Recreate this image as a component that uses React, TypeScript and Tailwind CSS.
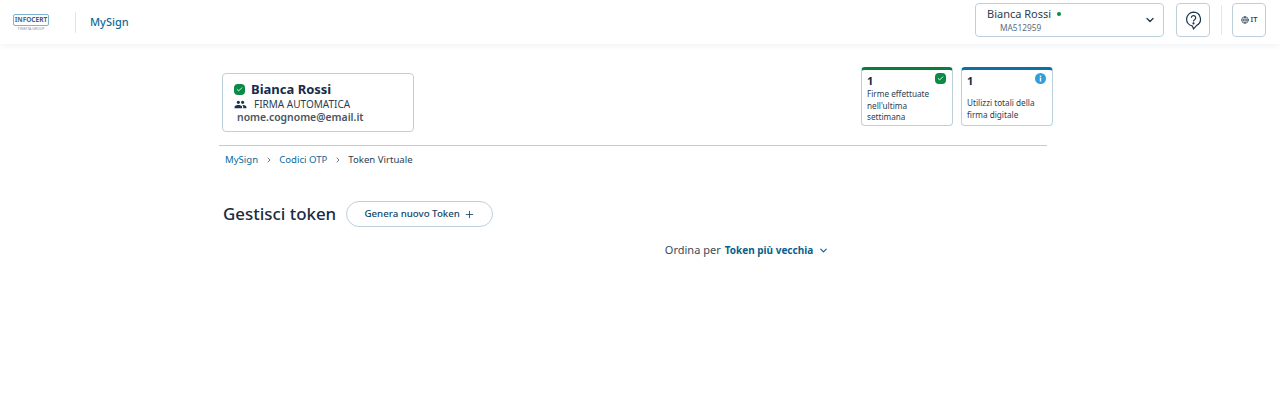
import React from "react";
import { ChevronDown, ChevronRight, Plus, Check, Globe } from "lucide-react";

const Logo = () => (
  <div className="flex flex-col items-center w-[36px]">
    <div className="flex h-[12px] w-[36px] items-center justify-center rounded-[2px] border border-[#7fb2d0] text-[6.5px] font-bold leading-none text-[#3d6f9a]">
      INFO<span className="text-[#4a5a78]">CERT</span>
    </div>
    <span className="mt-[1px] text-[3.5px] leading-none text-[#8a8f98]">TINEXTA GROUP</span>
  </div>
);

const HelpIcon = () => (
  <svg width="17" height="19" viewBox="0 0 17 19" fill="none" stroke="#1d3550" strokeWidth="1.2">
    <path d="M8.5 1.2a7 7 0 0 1 3.2 13.2L8.5 17.8 7.4 15.1A7 7 0 0 1 8.5 1.2z" />
    <path d="M6.3 6.8a2.2 2.2 0 1 1 3.3 1.9c-.7.4-1.1.9-1.1 1.8" />
    <circle cx="8.5" cy="12.4" r=".5" fill="#1d3550" />
  </svg>
);

const GroupIcon = () => (
  <svg width="13" height="13" viewBox="0 0 24 24" fill="#1d3550">
    <path d="M16 11c1.66 0 2.99-1.34 2.99-3S17.66 5 16 5s-3 1.34-3 3 1.34 3 3 3zm-8 0c1.66 0 2.99-1.34 2.99-3S9.66 5 8 5 5 6.34 5 8s1.34 3 3 3zm0 2c-2.33 0-7 1.17-7 3.5V19h14v-2.5C15 14.17 10.33 13 8 13zm8 0c-.29 0-.62.02-.97.05 1.16.84 1.97 1.97 1.97 3.45V19h6v-2.5c0-2.33-4.67-3.5-7-3.5z" />
  </svg>
);

const InfoDot = () => (
  <svg width="11" height="11" viewBox="0 0 11 11">
    <circle cx="5.5" cy="5.5" r="5.5" fill="#2f9fdc" />
    <rect x="4.8" y="4.6" width="1.4" height="3.9" fill="white" />
    <rect x="4.8" y="2.6" width="1.4" height="1.3" fill="white" />
  </svg>
);

const App = () => {
  return (
    <div className="min-h-[419px] bg-white font-['Noto_Sans','Open_Sans',sans-serif] text-[#1d3550]">
      {/* Top bar */}
      <header className="flex h-[44px] items-center justify-between shadow-[0_2px_6px_rgba(30,50,80,0.06)]">
        <div className="flex items-center pl-[13px]">
          <Logo />
          <div className="ml-[26px] h-[21px] w-px bg-[#dfe5ea]" />
          <span className="ml-[14px] text-[11px] font-medium text-[#0b6a9b]">MySign</span>
        </div>
        <div className="mb-[4px] flex items-center pr-[14px]">
          <div className="flex h-[34px] w-[189px] items-center justify-between rounded border border-[#bcd0dc] pl-[11px] pr-[7px]">
            <div className="flex flex-col">
              <div className="flex items-center text-[11px] leading-[14px] text-[#2c3e50]">
                Bianca Rossi
                <span className="ml-[6px] h-[4px] w-[4px] rounded-full bg-[#0a8a45]" />
              </div>
              <span className="ml-[13px] text-[8.3px] leading-[13px] text-[#5b6b7a]">MA512959</span>
            </div>
            <ChevronDown size={12} strokeWidth={2.5} />
          </div>
          <div className="ml-[12px] flex h-[34px] w-[34px] items-center justify-center rounded border border-[#bcd0dc]">
            <HelpIcon />
          </div>
          <div className="ml-[11px] h-[30px] w-px bg-[#e3e8ec]" />
          <div className="ml-[10px] flex h-[34px] w-[34px] items-center justify-center gap-[2px] rounded border border-[#bcd0dc] text-[7.5px] font-medium">
            <Globe size={8} strokeWidth={2} />
            IT
          </div>
        </div>
      </header>

      <main className="pl-[219px]">
        <div className="w-[828px]">
          <div className="flex items-start justify-between border-b border-[#c3ccd3] pb-[13px] pl-[3px] pr-0">
            <div className="mt-[29px] flex h-[59px] w-[192px] flex-col rounded border border-[#bcd0dc] pl-[11px] pt-[6px]">
              <div className="flex items-center">
                <span className="flex h-[11px] w-[11px] items-center justify-center rounded-[4px] bg-[#0a8a45]">
                  <Check size={7} strokeWidth={3} color="white" />
                </span>
                <span className="ml-[6px] text-[13px] font-bold leading-[18px] text-[#132c4a]">Bianca Rossi</span>
              </div>
              <div className="flex items-center text-[10px] leading-[13px] text-[#2c3e50]">
                <GroupIcon />
                <span className="ml-[7px]">FIRMA AUTOMATICA</span>
              </div>
              <span className="ml-[3px] text-[10.4px] font-semibold leading-[13px] text-[#4a5561]">nome.cognome@email.it</span>
            </div>

            <div className="mr-[-6px] mt-[23px] flex gap-[8px]">
              <div className="relative h-[59px] w-[92px] rounded border border-t-[3px] border-[#bcd0dc] border-t-[#0a7d3e] pl-[5px] pt-[4px]">
                <span className="absolute right-[6px] top-[3px] flex h-[11px] w-[11px] items-center justify-center rounded-[4px] bg-[#0a8a45]">
                  <Check size={7} strokeWidth={3} color="white" />
                </span>
                <div className="text-[11px] font-bold leading-[14px] text-[#132c4a]">1</div>
                <div className="text-[8.2px] leading-[11.5px] text-[#2c3e50]">
                  Firme effettuate
                  <br />
                  nell'ultima
                  <br />
                  settimana
                </div>
              </div>
              <div className="relative h-[59px] w-[92px] rounded border border-t-[3px] border-[#bcd0dc] border-t-[#0b6fa8] pl-[5px] pt-[4px]">
                <span className="absolute right-[6px] top-[3px]">
                  <InfoDot />
                </span>
                <div className="text-[11px] font-bold leading-[14px] text-[#132c4a]">1</div>
                <div className="mt-[9px] text-[8.2px] leading-[11.5px] text-[#2c3e50]">
                  Utilizzi totali della
                  <br />
                  firma digitale
                </div>
              </div>
            </div>
          </div>

          <nav className="mt-[7px] flex items-center pl-[6px] text-[9.6px] leading-[14px]">
            <span className="text-[#0b6a9b]">MySign</span>
            <ChevronRight size={8} className="mx-[6.5px]" />
            <span className="text-[#0b6a9b]">Codici OTP</span>
            <ChevronRight size={8} className="mx-[6.5px]" />
            <span className="text-[#2c3e50]">Token Virtuale</span>
          </nav>

          <div className="mt-[34px] flex items-center pl-[4px]">
            <h1 className="text-[16.9px] font-medium leading-[26px] text-[#1b2a41]">Gestisci token</h1>
            <button className="ml-[10px] flex h-[26px] w-[147px] items-center justify-center gap-[4px] rounded-full border border-[#bcd0dc] text-[9.7px] font-medium text-[#0f4468]">
              Genera nuovo Token
              <Plus size={11} strokeWidth={1.8} />
            </button>
          </div>

          <div className="mt-[14px] flex items-center justify-center pl-[228px] text-[11px] leading-[18px]">
            <span className="text-[#3c4a58]">Ordina per</span>
            <span className="ml-[4px] text-[10px] font-bold text-[#0b5f8c]">Token più vecchia</span>
            <ChevronDown size={11} strokeWidth={2.5} className="ml-[5px] text-[#0b5f8c]" />
          </div>
        </div>
      </main>
    </div>
  );
};

export default App;
